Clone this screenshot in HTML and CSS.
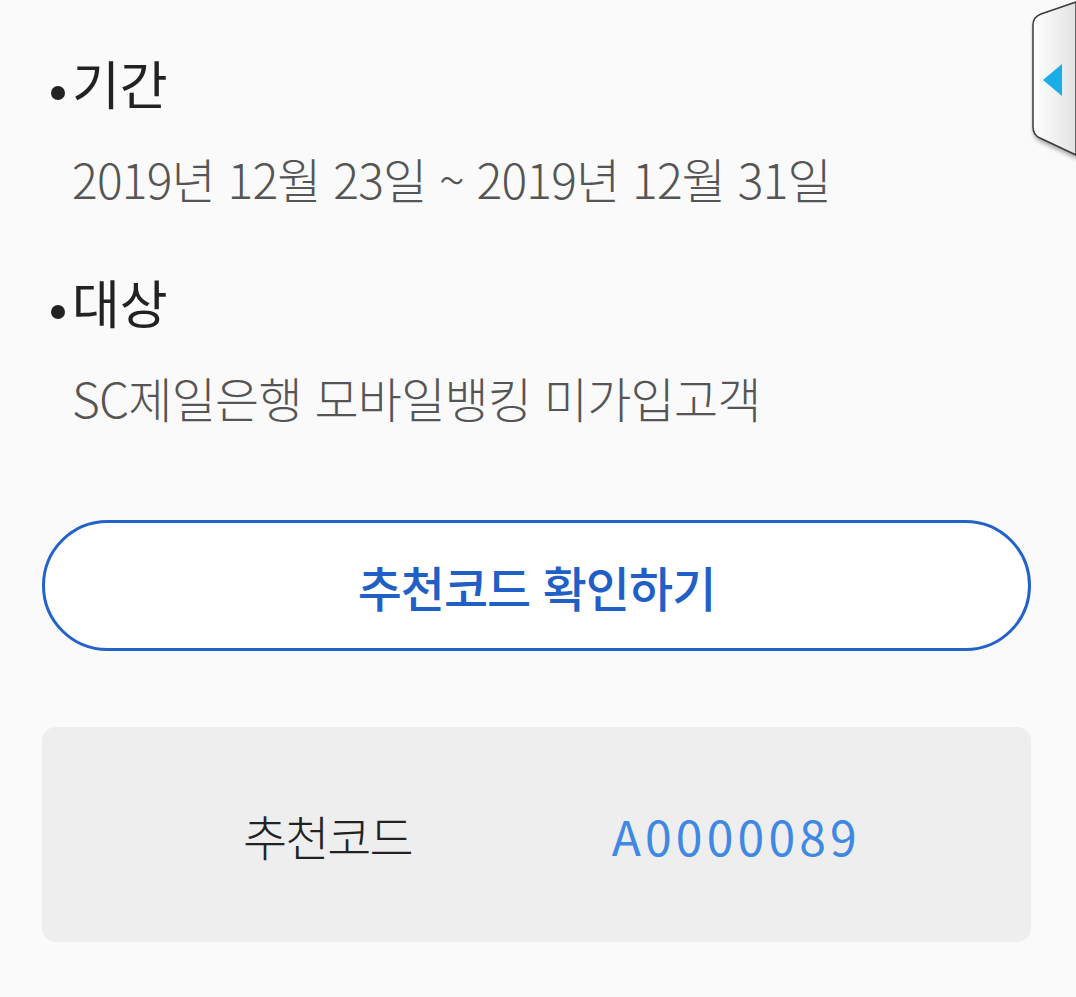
FILE: index.html
```html
<!DOCTYPE html>
<html lang="ko">
<head>
<meta charset="UTF-8">
<title>추천코드</title>
<link rel="stylesheet" href="styles.css">
</head>
<body>
<div class="page">
	<div class="info">
		<h2 class="info-title"><span class="dot"></span>기간</h2>
		<p class="info-text">2019년 12월 23일 ~ 2019년 12월 31일</p>
	</div>
	<div class="info info-second">
		<h2 class="info-title"><span class="dot"></span>대상</h2>
		<p class="info-text">SC제일은행 모바일뱅킹 미가입고객</p>
	</div>

	<button class="btn-check" type="button">추천코드 확인하기</button>

	<div class="code-box">
		<span class="code-label">추천코드</span>
		<span class="code-value">A0000089</span>
	</div>
</div>

<div class="side-tab">
	<svg width="46" height="162" viewBox="0 0 46 162">
		<defs>
			<linearGradient id="tabfill" x1="0" y1="0" x2="1" y2="0">
				<stop offset="0" stop-color="#ffffff"/>
				<stop offset="1" stop-color="#e2e2e2"/>
			</linearGradient>
			<filter id="tabshadow" x="-30%" y="-10%" width="160%" height="125%">
				<feDropShadow dx="1" dy="3" stdDeviation="2" flood-color="#000" flood-opacity="0.35"/>
			</filter>
		</defs>
		<path d="M46 2 L11 14 Q3 17 3 25 L3 127 Q3 135 10 138 L46 155 Z" fill="url(#tabfill)" stroke="#3a3a3a" stroke-width="1.5" filter="url(#tabshadow)"/>
		<polygon points="13,80 32,64 32,96" fill="#19aee8"/>
	</svg>
</div>
</body>
</html>
```
FILE: styles.css
```css
* {
	margin: 0;
	padding: 0;
	box-sizing: border-box;
}

html,
body {
	background: #fafafa;
}

body {
	width: 1076px;
	height: 997px;
	overflow: hidden;
	position: relative;
	font-family: "Noto Sans CJK KR", "Noto Sans", sans-serif;
	font-weight: 300;
}

.page {
	padding: 44px 45px 0 42px;
}

.info-title {
	display: flex;
	align-items: center;
	font-size: 52px;
	font-weight: 400;
	line-height: 78px;
	color: #222;
}

.dot {
	width: 14px;
	height: 14px;
	border-radius: 50%;
	background: #222;
	margin: 0 7px 0 9px;
	position: relative;
	top: 10px;
}

.info-text {
	padding-left: 30px;
	margin-top: 20px;
	font-size: 48px;
	line-height: 72px;
	letter-spacing: -0.8px;
	color: #555;
}

.info-second {
	margin-top: 49px;
}

.btn-check {
	display: block;
	width: 100%;
	height: 131px;
	margin-top: 87px;
	border: 3px solid #2362c9;
	border-radius: 66px;
	background: #fff;
	color: #1f5fc6;
	font-family: "Noto Sans CJK KR", sans-serif;
	font-size: 48px;
	font-weight: 500;
	letter-spacing: -1px;
}

.code-box {
	display: flex;
	align-items: center;
	gap: 200px;
	height: 215px;
	margin-top: 76px;
	padding-left: 201px;
	border-radius: 14px;
	background: #eeeeee;
	font-size: 48px;
}

.code-label {
	color: #222;
	letter-spacing: -2px;
}

.code-value {
	color: #3f88e3;
	font-weight: 400;
	letter-spacing: 4.2px;
}

.side-tab {
	position: absolute;
	top: 0;
	right: 0;
	width: 46px;
	height: 162px;
}

.side-tab svg {
	display: block;
}
```
